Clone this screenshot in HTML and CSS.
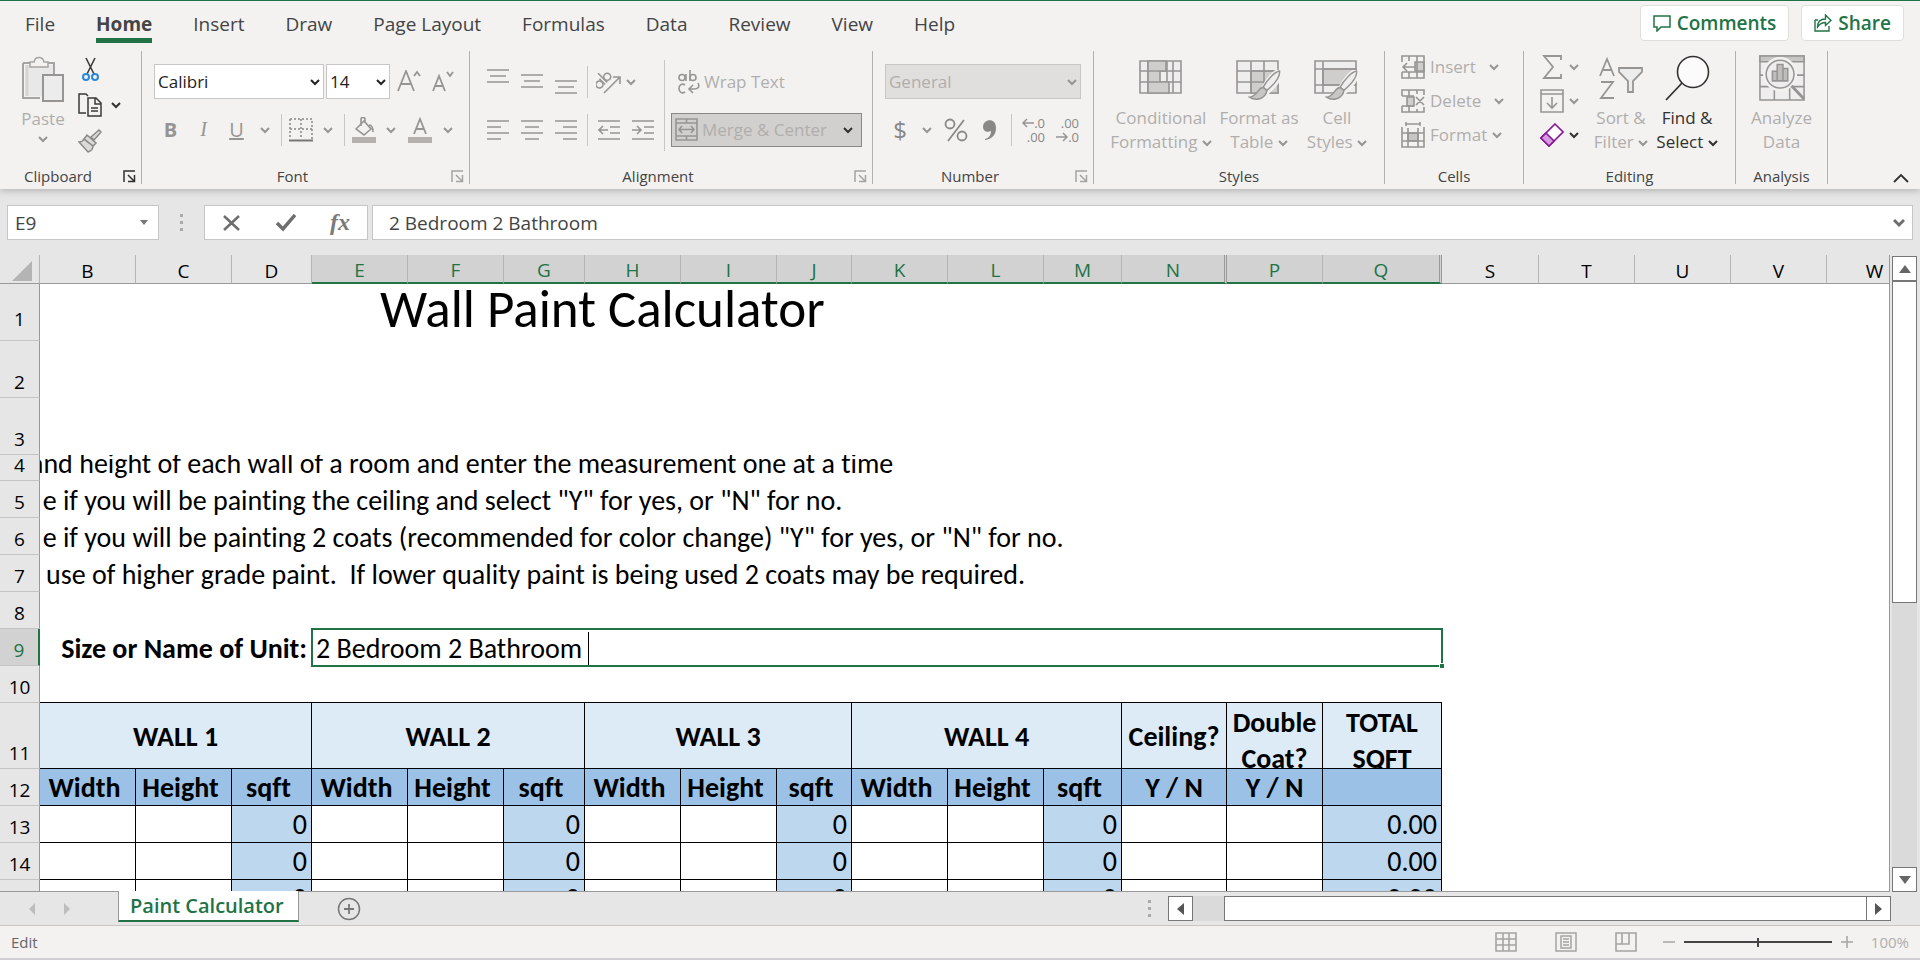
FILE: index.html
```html
<!DOCTYPE html>
<html lang="en">
<head>
<meta charset="utf-8">
<title>Paint Calculator</title>
<link rel="stylesheet" href="styles.css">
</head>
<body>
<svg class="defs" aria-hidden="true">
  <symbol id="chev" viewBox="0 0 10 10"><path d="M1 3l4 4 4-4" fill="none" stroke="currentColor" stroke-width="2"/></symbol>
  <symbol id="launch" viewBox="0 0 13 13"><path d="M1 12V1h11M5 5l6 6M11.500 5v6.500H5" fill="none" stroke="currentColor" stroke-width="1.500"/></symbol>
  <symbol id="brush" viewBox="0 0 34 32"><path d="M32 1c-5 1-12 9-16 17l4 4C26 17 33 9 32 1z" fill="#f3f2f1" stroke="#f3f2f1" stroke-width="5"/><path d="M32 1c-5 1-13 9-17 17l4 3C25 16 33 8 32 1z" fill="#eee" stroke="#979593" stroke-width="1.500"/><path d="M15 18c-6 0-5 9-14 10 6 4 16 3 18-7z" fill="#c8c6c4" stroke="#979593" stroke-width="1.500"/></symbol>
</svg>
<div class="app">
<header class="ribbon">
  <nav class="tabs">
    <a class="tab" href="#">File</a><a class="tab tab-on" href="#">Home</a><a class="tab" href="#">Insert</a><a class="tab" href="#">Draw</a><a class="tab" href="#">Page Layout</a><a class="tab" href="#">Formulas</a><a class="tab" href="#">Data</a><a class="tab" href="#">Review</a><a class="tab" href="#">View</a><a class="tab" href="#">Help</a>
    <div class="tab-actions">
      <button class="action"><svg width="18" height="18" viewBox="0 0 18 18"><path d="M1 2h16v11H8l-4 4v-4H1z" fill="none" stroke="currentColor" stroke-width="1.500"/></svg>Comments</button>
      <button class="action"><svg width="18" height="18" viewBox="0 0 18 18"><path d="M1 6v11h14v-5M1 6h3M3.500 13c0-5 3-8 8-8V1l5.500 5.500-5.500 5V8.500c-4 0-6 1.500-8 4.500z" fill="none" stroke="currentColor" stroke-width="1.400"/></svg>Share</button>
    </div>
  </nav>
  <div class="groups">
    <section class="group g-clipboard">
      <div class="body">
        <button class="big paste"><svg width="42" height="46" viewBox="0 0 42 46"><path d="M1 7h31v12M18 42H1V7" fill="none" stroke="#a6a4a2" stroke-width="2"/><path d="M3 9h28v10H20v21H3z" fill="#e8e8e8"/><path d="M5 9v31" stroke="#d6d4d2" stroke-width="3"/><path d="M8 11V6h4c1-6 9-6 10 0h4v5z" fill="#f3f2f1" stroke="#a6a4a2" stroke-width="1.500"/><path d="M21 19h20v26H21z" fill="#ececec" stroke="#979593" stroke-width="2"/></svg><span>Paste</span><svg class="chev"><use href="#chev"/></svg></button>
        <div class="clip-tools">
          <button class="tool" aria-label="Cut"><svg width="24" height="24" viewBox="0 0 24 24"><path d="M8 1l8 16M17 1L9 17" stroke="#3b3a39" stroke-width="1.600"/><circle cx="8" cy="20" r="3" fill="none" stroke="#2b88d8" stroke-width="2"/><circle cx="17" cy="20" r="3" fill="none" stroke="#2b88d8" stroke-width="2"/></svg></button>
          <div class="pair"><button class="tool" aria-label="Copy"><svg width="24" height="24" viewBox="0 0 24 24"><path d="M8 20H1V1h7l2 2M10 23V5h8l5 5v13zM17 5v6h6M13 15h7M13 18h7" fill="none" stroke="#3b3a39" stroke-width="1.500"/></svg></button><svg class="chev dark"><use href="#chev"/></svg></div>
          <button class="tool" aria-label="Format Painter"><svg width="24" height="24" viewBox="0 0 24 24"><path d="M13 8l8-7 2 2-7 8zM9 6l9 8-3 3-9-7zM6 10c-1 2-3 3-5 3l9 10c3-1 5-3 5-6z" fill="#dcdad8" stroke="#8a8886" stroke-width="1.500"/></svg></button>
        </div>
      </div>
      <footer class="foot"><span>Clipboard</span><svg class="launch dark"><use href="#launch"/></svg></footer>
    </section>
    <section class="group g-font">
      <div class="body rows">
        <div class="row">
          <label class="sel sel-font"><select aria-label="Font"><option>Calibri</option></select><svg class="chev"><use href="#chev"/></svg></label>
          <label class="sel sel-size"><select aria-label="Font size"><option>14</option></select><svg class="chev"><use href="#chev"/></svg></label>
          <button class="tool w34" aria-label="Increase font size"><svg width="24" height="24" viewBox="0 0 24 24"><path d="M1 21L9 1l8 20M4 14h10M17 6l3-4 3 4" fill="none" stroke="#979593" stroke-width="1.800"/></svg></button>
          <button class="tool w34" aria-label="Decrease font size"><svg width="24" height="24" viewBox="0 0 24 24"><path d="M2 21L8 6l6 15M4 16h8M16 2l3 4 3-4" fill="none" stroke="#979593" stroke-width="1.800"/></svg></button>
        </div>
        <div class="row">
          <button class="tool w33 fmt"><b>B</b></button><button class="tool w33 fmt serif"><i>I</i></button><button class="tool w33 fmt"><u>U</u></button><svg class="chev wide"><use href="#chev"/></svg>
          <i class="sep"></i>
          <button class="tool w30" aria-label="Borders"><svg width="24" height="24" viewBox="0 0 24 24"><path d="M1 1h22v20M1 1v20M12 1v20M1 11h22" fill="none" stroke="#8a8886" stroke-width="1.500" stroke-dasharray="2 2"/><path d="M0 22.500h24" stroke="#797775" stroke-width="2"/></svg></button><svg class="chev wide"><use href="#chev"/></svg>
          <i class="sep"></i>
          <button class="tool w30" aria-label="Fill color"><svg width="26" height="26" viewBox="0 0 26 26"><path d="M5 12l8-8 7 8-7 6zM10 9V2c0-2 4-2 4 0v4M18 8c3 0 4 3 4 7" fill="none" stroke="#979593" stroke-width="1.600"/><path d="M1 20h24v6H1z" fill="#b3b0ad"/></svg></button><svg class="chev wide"><use href="#chev"/></svg>
          <button class="tool w33" aria-label="Font color"><svg width="26" height="26" viewBox="0 0 26 26"><path d="M7 17L13 2l6 15M9 12h8" fill="none" stroke="#979593" stroke-width="1.800"/><path d="M1 20h24v6H1z" fill="#b3b0ad"/></svg></button><svg class="chev wide"><use href="#chev"/></svg>
        </div>
      </div>
      <footer class="foot"><span>Font</span><svg class="launch"><use href="#launch"/></svg></footer>
    </section>
    <section class="group g-align">
      <div class="body">
        <div class="rows">
          <div class="row">
            <button class="tool w34" aria-label="Top align"><svg width="22" height="26" viewBox="0 0 22 26"><path d="M0 1h22M3 7h16M0 13h22" stroke="#979593" stroke-width="1.600"/></svg></button>
            <button class="tool w34" aria-label="Middle align"><svg width="22" height="26" viewBox="0 0 22 26"><path d="M0 6h22M3 12h16M0 18h22" stroke="#979593" stroke-width="1.600"/></svg></button>
            <button class="tool w34" aria-label="Bottom align"><svg width="22" height="26" viewBox="0 0 22 26"><path d="M0 12h22M3 18h16M0 24h22" stroke="#979593" stroke-width="1.600"/></svg></button>
            <i class="sep"></i>
            <button class="tool w34" aria-label="Orientation"><svg width="26" height="26" viewBox="0 0 26 26"><g fill="none" stroke="#979593" stroke-width="1.600"><path d="M8 24L24 8M17 8h7v7"/><g transform="rotate(-45 7 12)"><circle cx="2" cy="12" r="3.500"/><path d="M6 8v8M9 3v13"/><circle cx="13" cy="12" r="3.500"/></g></g></svg></button><svg class="chev"><use href="#chev"/></svg>
          </div>
          <div class="row">
            <button class="tool w34" aria-label="Align left"><svg width="22" height="20" viewBox="0 0 22 20"><path d="M0 1h22M0 7h14M0 13h22M0 19h14" stroke="#979593" stroke-width="1.600"/></svg></button>
            <button class="tool w34" aria-label="Center"><svg width="22" height="20" viewBox="0 0 22 20"><path d="M0 1h22M4 7h14M0 13h22M4 19h14" stroke="#979593" stroke-width="1.600"/></svg></button>
            <button class="tool w34" aria-label="Align right"><svg width="22" height="20" viewBox="0 0 22 20"><path d="M0 1h22M8 7h14M0 13h22M8 19h14" stroke="#979593" stroke-width="1.600"/></svg></button>
            <i class="sep"></i>
            <button class="tool w34" aria-label="Decrease indent"><svg width="22" height="20" viewBox="0 0 22 20"><path d="M0 1h22M12 7h10M12 13h10M0 19h22M10 10H1M5 6l-4 4 4 4" fill="none" stroke="#979593" stroke-width="1.600"/></svg></button>
            <button class="tool w34" aria-label="Increase indent"><svg width="22" height="20" viewBox="0 0 22 20"><path d="M0 1h22M12 7h10M12 13h10M0 19h22M0 10h9M5 6l4 4-4 4" fill="none" stroke="#979593" stroke-width="1.600"/></svg></button>
          </div>
        </div>
        <i class="sep tall"></i>
        <div class="rows merge-col">
          <div class="row"><button class="text-tool"><svg width="22" height="26" viewBox="0 0 22 26"><g fill="none" stroke="#979593" stroke-width="1.600"><circle cx="4" cy="8.500" r="3"/><path d="M8 5v7M12 1v11M7 16c-3-2-6 0-6 3.500S4 25 7 23M20 14c2 4 0 6-4 6h-5M15 16l-4 4 4 4"/><circle cx="15" cy="8.500" r="3"/></g></svg>Wrap Text</button></div>
          <div class="row"><button class="text-tool merge"><svg width="23" height="23" viewBox="0 0 23 23"><path d="M1 1h21v21H1zM1 5h21M1 18h21M11.500 1v4M11.500 18v4" fill="none" stroke="#979593" stroke-width="1.600"/><path d="M4 11.500h15M7 8l-3 3.500L7 15M16 8l3 3.500-3 3.500" fill="none" stroke="#979593" stroke-width="1.600"/></svg><span>Merge &amp; Center</span><svg class="chev dark"><use href="#chev"/></svg></button></div>
        </div>
      </div>
      <footer class="foot"><span>Alignment</span><svg class="launch"><use href="#launch"/></svg></footer>
    </section>
    <section class="group g-number">
      <div class="body rows">
        <div class="row"><label class="sel sel-num"><select aria-label="Number format" disabled><option>General</option></select><svg class="chev"><use href="#chev"/></svg></label></div>
        <div class="row">
          <button class="tool w30 money">$</button><svg class="chev wide"><use href="#chev"/></svg>
          <button class="tool w34" aria-label="Percent"><svg width="24" height="24" viewBox="0 0 24 24"><g fill="none" stroke="#8a8886" stroke-width="1.800"><circle cx="6" cy="6" r="4.500"/><circle cx="18" cy="18" r="4.500"/><path d="M20 2L4 23"/></g></svg></button>
          <button class="tool w34" aria-label="Comma style"><svg width="14" height="20" viewBox="0 0 14 20"><path d="M2 19c4-1 6-4 6-8-4 2-8 0-8-4 0-8 13-10 13 1 0 7-4 11-11 12z" fill="#8a8886"/></svg></button>
          <i class="sep"></i>
          <button class="tool w34 dec" aria-label="Increase decimal"><span><svg width="12" height="10" viewBox="0 0 12 10"><path d="M12 5H1M5 1L1 5l4 4" fill="none" stroke="#979593" stroke-width="1.500"/></svg>.0</span><span>.00</span></button>
          <button class="tool w34 dec" aria-label="Decrease decimal"><span>.00</span><span><svg width="12" height="10" viewBox="0 0 12 10"><path d="M0 5h11M7 1l4 4-4 4" fill="none" stroke="#979593" stroke-width="1.500"/></svg>.0</span></button>
        </div>
      </div>
      <footer class="foot"><span>Number</span><svg class="launch"><use href="#launch"/></svg></footer>
    </section>
    <section class="group g-styles">
      <div class="body">
        <button class="big w110"><svg width="44" height="46" viewBox="0 0 44 46"><g stroke="#979593" stroke-width="1.600"><path d="M1 6h41v32H1z" fill="#eee"/><path d="M1 16h41M1 27h41M9 6v32M28 6v32M34 6v32" fill="none"/><path d="M9 6h18v10H9zM9 16h12v11H9zM9 27h21v11H9z" fill="#d0cecc"/></g></svg><span>Conditional<br>Formatting <svg class="chev"><use href="#chev"/></svg></span></button>
        <button class="big w86"><svg width="46" height="46" viewBox="0 0 46 46"><g stroke="#979593" stroke-width="1.600"><path d="M1 6h41v32H1z" fill="#eee"/><path d="M15 16h27v22H15z" fill="#d0cecc"/><path d="M1 16h41M1 27h41M15 6v32M28 6v32" fill="none"/></g><use href="#brush" x="12" y="15" width="34" height="31"/></svg><span>Format as<br>Table <svg class="chev"><use href="#chev"/></svg></span></button>
        <button class="big w70"><svg width="46" height="46" viewBox="0 0 46 46"><g stroke="#979593" stroke-width="1.600"><path d="M1 6h41v32H1z" fill="#eee"/><path d="M9 14h33v16H9z" fill="#d0cecc"/><path d="M1 14h41M1 30h41M9 6v32" fill="none"/></g><use href="#brush" x="11" y="15" width="34" height="31"/></svg><span>Cell<br>Styles <svg class="chev"><use href="#chev"/></svg></span></button>
      </div>
      <footer class="foot plain"><span>Styles</span></footer>
    </section>
    <section class="group g-cells">
      <div class="body stack">
        <button class="text-tool"><svg width="24" height="24" viewBox="0 0 24 24"><g fill="none" stroke="#979593" stroke-width="1.600"><path d="M14 7h9v9h-9z" fill="#d0cecc"/><path d="M1 7V1h22v22H1v-6M1 17h22M8 1v5M16 1v22M8 17v6M14 12H2M6 8l-4 4 4 4"/></g></svg><span>Insert</span><svg class="chev far"><use href="#chev"/></svg></button>
        <button class="text-tool"><svg width="24" height="24" viewBox="0 0 24 24"><g fill="none" stroke="#979593" stroke-width="1.600"><path d="M6 8h7v9H6z" fill="#d0cecc"/><path d="M1 7V1h22v5M1 7h12M1 17h12M1 17v6h22v-5M8 1v6M16 1v4M8 17v6M16 20v3M15 8l8 8M23 8l-8 8"/></g></svg><span>Delete</span><svg class="chev far"><use href="#chev"/></svg></button>
        <button class="text-tool"><svg width="24" height="26" viewBox="0 0 24 26"><g fill="none" stroke="#979593" stroke-width="1.600"><path d="M7 11h10v8H7z" fill="#c8c6c4"/><path d="M1 5v20h22V5M1 11h22M1 19h22M7 6v19M17 6v19M5 2h14M5 0v4M19 0v4"/></g></svg><span>Format</span><svg class="chev"><use href="#chev"/></svg></button>
      </div>
      <footer class="foot plain"><span>Cells</span></footer>
    </section>
    <section class="group g-editing">
      <div class="body">
        <div class="stack">
          <button class="text-tool" aria-label="AutoSum"><svg width="24" height="24" viewBox="0 0 24 24"><path d="M21 5V1H4l9 11L4 23h17v-4" fill="none" stroke="#979593" stroke-width="1.800"/></svg><svg class="chev"><use href="#chev"/></svg></button>
          <button class="text-tool" aria-label="Fill"><svg width="24" height="24" viewBox="0 0 24 24"><path d="M1 1h22v22H1zM1 5h22M12 8v11M7 14l5 5 5-5" fill="none" stroke="#979593" stroke-width="1.600"/></svg><svg class="chev"><use href="#chev"/></svg></button>
          <button class="text-tool" aria-label="Clear"><svg width="24" height="24" viewBox="0 0 24 24"><path d="M15 1l8 8L9 23l-8-8z" fill="#fff" stroke="#881798" stroke-width="1.600"/><path d="M6 10l8 8-5 5-8-8z" fill="#d59ae0" stroke="#881798" stroke-width="1.600"/></svg><svg class="chev dark"><use href="#chev"/></svg></button>
        </div>
        <button class="big w66"><svg width="44" height="46" viewBox="0 0 44 46"><g fill="none" stroke="#979593" stroke-width="1.800"><path d="M1 21L8 4l7 17M4 15h8M2 27h12L2 43h13"/><path d="M20 13h23v4l-9 9v11h-5V26l-9-9z" fill="#ececec"/></g></svg><span>Sort &amp;<br>Filter <svg class="chev"><use href="#chev"/></svg></span></button>
        <button class="big w66 dark"><svg width="46" height="46" viewBox="0 0 46 46"><circle cx="29" cy="17" r="15.500" fill="#fbfbfb" stroke="#323130" stroke-width="1.600"/><path d="M18 28L2 45" stroke="#323130" stroke-width="1.800"/></svg><span>Find &amp;<br>Select <svg class="chev dark"><use href="#chev"/></svg></span></button>
      </div>
      <footer class="foot plain"><span>Editing</span></footer>
    </section>
    <section class="group g-analysis">
      <div class="body">
        <button class="big w91"><svg width="48" height="46" viewBox="0 0 48 48"><g stroke="#979593" stroke-width="1.600"><path d="M1 1h46v46H1z" fill="#eee"/><path d="M1 1h46v6H1z" fill="#c8c6c4"/><path d="M1 21h46M1 33h46M16 33v14M32 33v14" fill="none"/><circle cx="22" cy="20" r="17" fill="#f3f2f1" stroke="#f3f2f1"/><circle cx="22" cy="20" r="14.500" fill="#eee"/><path d="M34 32l13 14" stroke-width="3"/><path d="M14 17h5v10h-5zM19 10h6v17h-6zM25 14h5v13h-5z" fill="#c0bebc"/></g></svg><span>Analyze<br>Data</span></button>
      </div>
      <footer class="foot plain"><span>Analysis</span></footer>
    </section>
    <button class="collapse" aria-label="Collapse ribbon"><svg width="16" height="10" viewBox="0 0 16 10"><path d="M1 9l7-7 7 7" fill="none" stroke="#323130" stroke-width="1.800"/></svg></button>
  </div>
</header>
<div class="formula-bar">
  <div class="name-box"><input aria-label="Name box" value="E9"><svg width="8" height="5" viewBox="0 0 8 5"><path d="M0 0h8L4 5z" fill="#777"/></svg></div>
  <div class="dots"><i></i><i></i><i></i></div>
  <div class="fx-tools">
    <button aria-label="Cancel"><svg width="20" height="18" viewBox="0 0 20 18"><path d="M2 2l15 14M17 2L2 16" stroke="#6e6e6e" stroke-width="2.500"/></svg></button>
    <button aria-label="Enter"><svg width="20" height="18" viewBox="0 0 20 18"><path d="M1 9l6 6L19 1" fill="none" stroke="#6e6e6e" stroke-width="3.500"/></svg></button>
    <button class="fx"><i>fx</i></button>
  </div>
  <div class="formula"><input aria-label="Formula" value="2 Bedroom 2 Bathroom"><svg width="12" height="10" viewBox="0 0 12 10"><path d="M1 2l5 5 5-5" fill="none" stroke="#6e6e6e" stroke-width="3"/></svg></div>
</div>
<main class="work">
  <div class="sheet">
    <table class="grid">
      <colgroup><col class="c40"><col class="c96"><col class="c96"><col class="c80"><col class="c96"><col class="c96"><col class="c81"><col class="c96"><col class="c96"><col class="c75"><col class="c96"><col class="c96"><col class="c78"><col class="c105"><col class="c96"><col class="c119"><col class="c97"><col class="c96"><col class="c96"><col class="c96"><col class="c96"></colgroup>
      <thead><tr><th class="corner"><svg width="20" height="20" viewBox="0 0 20 20"><path d="M20 0v20H0z" fill="#b4b4b4"/></svg></th><th>B</th><th>C</th><th>D</th><th class="on">E</th><th class="on">F</th><th class="on">G</th><th class="on">H</th><th class="on">I</th><th class="on">J</th><th class="on">K</th><th class="on">L</th><th class="on">M</th><th class="on skip">N</th><th class="on">P</th><th class="on skip">Q</th><th>S</th><th>T</th><th>U</th><th>V</th><th>W</th></tr></thead>
      <tbody>
        <tr class="r57 first"><th>1</th><td colspan="3"></td><td colspan="17" class="title">Wall Paint Calculator</td></tr>
        <tr class="r57"><th>2</th><td colspan="20"></td></tr>
        <tr class="r57"><th>3</th><td colspan="20"></td></tr>
        <tr class="r26"><th>4</th><td colspan="20"><div class="note">and height of each wall of a room and enter the measurement one at a time</div></td></tr>
        <tr class="r37"><th>5</th><td colspan="20"><div class="note">  e if you will be painting the ceiling and select "Y" for yes, or "N" for no.</div></td></tr>
        <tr class="r37"><th>6</th><td colspan="20"><div class="note">  e if you will be painting 2 coats (recommended for color change) "Y" for yes, or "N" for no.</div></td></tr>
        <tr class="r37"><th>7</th><td colspan="20"><div class="note">r use of higher grade paint.&nbsp; If lower quality paint is being used 2 coats may be required.</div></td></tr>
        <tr class="r37"><th>8</th><td colspan="20"></td></tr>
        <tr class="r37"><th class="on">9</th><td colspan="3" class="unit"><label for="unit">Size or Name of Unit:</label></td><td colspan="12" class="active"><div class="editor"><input id="unit" value="2 Bedroom 2 Bathroom"><i class="caret"></i></div><i class="handle"></i></td><td colspan="5"></td></tr>
        <tr class="r37 above"><th>10</th><td colspan="15"></td><td colspan="5" class="off"></td></tr>
        <tr class="r66 walls"><th>11</th><td colspan="3">WALL 1</td><td colspan="3">WALL 2</td><td colspan="3">WALL 3</td><td colspan="3">WALL 4</td><td>Ceiling?</td><td><div class="wrap">Double Coat?</div></td><td><div class="wrap">TOTAL SQFT</div></td><td colspan="5" class="off"></td></tr>
        <tr class="r37 heads"><th>12</th><td>Width</td><td>Height</td><td>sqft</td><td>Width</td><td>Height</td><td>sqft</td><td>Width</td><td>Height</td><td>sqft</td><td>Width</td><td>Height</td><td>sqft</td><td class="yn">Y / N</td><td class="yn">Y / N</td><td></td><td colspan="5" class="off"></td></tr>
        <tr class="r37 data"><th>13</th><td></td><td></td><td class="sum">0</td><td></td><td></td><td class="sum">0</td><td></td><td></td><td class="sum">0</td><td></td><td></td><td class="sum">0</td><td></td><td></td><td class="sum">0.00</td><td colspan="5" class="off"></td></tr>
        <tr class="r37 data"><th>14</th><td></td><td></td><td class="sum">0</td><td></td><td></td><td class="sum">0</td><td></td><td></td><td class="sum">0</td><td></td><td></td><td class="sum">0</td><td></td><td></td><td class="sum">0.00</td><td colspan="5" class="off"></td></tr>
        <tr class="r37 data"><th></th><td></td><td></td><td class="sum">0</td><td></td><td></td><td class="sum">0</td><td></td><td></td><td class="sum">0</td><td></td><td></td><td class="sum">0</td><td></td><td></td><td class="sum">0.00</td><td colspan="5" class="off"></td></tr>
      </tbody>
    </table>
  </div>
  <div class="vscroll">
    <button aria-label="Scroll up"><svg width="12" height="8" viewBox="0 0 12 8"><path d="M0 8h12L6 0z" fill="#666"/></svg></button>
    <div class="vtrack"><div class="vthumb"></div></div>
    <button aria-label="Scroll down"><svg width="12" height="8" viewBox="0 0 12 8"><path d="M0 0h12L6 8z" fill="#666"/></svg></button>
  </div>
</main>
<div class="sheet-tabs">
  <div class="arrows"><svg width="6" height="12" viewBox="0 0 6 12"><path d="M6 0v12L0 6z" fill="#bdbdbd"/></svg><svg width="6" height="12" viewBox="0 0 6 12"><path d="M0 0v12l6-6z" fill="#bdbdbd"/></svg></div>
  <button class="sheet-tab">Paint Calculator</button>
  <button class="add" aria-label="New sheet"><svg width="24" height="24" viewBox="0 0 24 24"><circle cx="12" cy="12" r="10.500" fill="none" stroke="#777" stroke-width="1.500"/><path d="M12 7v10M7 12h10" stroke="#777" stroke-width="1.800"/></svg></button>
  <div class="dots push"><i></i><i></i><i></i></div>
  <div class="hscroll">
    <button aria-label="Scroll left"><svg width="7" height="12" viewBox="0 0 7 12"><path d="M7 0v12L0 6z" fill="#555"/></svg></button>
    <div class="htrack"><div class="hthumb"></div></div>
    <button aria-label="Scroll right"><svg width="7" height="12" viewBox="0 0 7 12"><path d="M0 0v12l7-6z" fill="#555"/></svg></button>
  </div>
</div>
<footer class="status">
  <span class="mode">Edit</span>
  <button aria-label="Normal view"><svg width="22" height="20" viewBox="0 0 22 20"><path d="M1 1h20v18H1zM1 7h20M1 13h20M8 1v18M14 1v18" fill="none" stroke="#a6a4a2" stroke-width="1.600"/></svg></button>
  <button aria-label="Page layout view"><svg width="22" height="20" viewBox="0 0 22 20"><path d="M1 1h20v18H1zM6 4h10v12H6zM8 7h6M8 10h6M8 13h6" fill="none" stroke="#a6a4a2" stroke-width="1.500"/></svg></button>
  <button aria-label="Page break view"><svg width="22" height="20" viewBox="0 0 22 20"><path d="M1 1h20v18H1zM1 12h13V1M7 1v11" fill="none" stroke="#a6a4a2" stroke-width="1.600"/></svg></button>
  <div class="zoom"><svg width="12" height="12" viewBox="0 0 12 12"><path d="M0 6h12" stroke="#a6a4a2" stroke-width="1.500"/></svg><input type="range" aria-label="Zoom" value="50"><svg width="12" height="12" viewBox="0 0 12 12"><path d="M0 6h12M6 0v12" stroke="#a6a4a2" stroke-width="1.500"/></svg></div>
  <span class="pct">100%</span>
</footer>
</div>
</body>
</html>
```

FILE: styles.css
```css
* { box-sizing: border-box; }
body { margin: 0; background: #e6e6e6; font-family: "Open Sans", "Noto Sans", sans-serif; color: #444; }
button { font: inherit; color: inherit; background: none; border: 0; padding: 0; }
input, select { font: inherit; color: inherit; border: 0; background: none; outline: 0; padding: 0; min-width: 0; }
svg { display: block; flex: none; }
.defs { width: 0; height: 0; position: absolute; }
.app { display: flex; flex-direction: column; height: 100vh; overflow: hidden; }

.ribbon { background: #f3f2f1; border-top: 1px solid #217346; box-shadow: 0 1px 8px #a8a8a8; height: 189px; flex: none; }
.tabs { display: flex; height: 50px; padding: 4px 16px 0 25px; gap: 41px; font-size: 19px; }
.tab { color: #444; text-decoration: none; line-height: 38px; height: 38px; }
.tab-on { font-weight: 700; border-bottom: 5px solid #217346; }
.tab-actions { margin-left: auto; display: flex; gap: 12px; }
.action { display: flex; align-items: center; gap: 6px; height: 36px; padding: 0 12px; background: #fff; border: 1px solid #e1dfdd; border-radius: 4px; color: #217346; font-weight: 600; }
.groups { display: flex; height: 133px; }
.group { display: flex; flex-direction: column; border-right: 1px solid #b3b0ad; flex: none; font-size: 17px; color: #b0aeac; }
.body { display: flex; flex: 1; }
.foot { display: flex; align-items: center; justify-content: center; height: 16px; padding-right: 26px; font-size: 15px; line-height: 22px; color: #444; position: relative; }
.plain { padding-right: 0; }
.launch { width: 13px; height: 13px; position: absolute; right: 5px; top: 2px; color: #a6a4a2; }
.chev { width: 10px; height: 10px; color: #979593; }
.dark, .chev.dark, .launch.dark { color: #323130; }
.wide { width: 24px; padding: 0 7px; }
.tool { display: flex; align-items: center; justify-content: center; }
.w30 { width: 30px; } .w33 { width: 33px; } .w34 { width: 34px; }
.sep { width: 1px; height: 32px; background: #c8c6c4; margin: 0 4px; flex: none; }
.tall { height: 91px; margin-top: 9px; }

.rows { display: flex; flex-direction: column; }
.row { display: flex; align-items: center; height: 35px; margin-top: 13px; }
.big { display: flex; flex-direction: column; align-items: center; line-height: 24px; white-space: nowrap; }
.big > svg { margin: 4px 0 5px; }
.big .chev { display: inline-block; }
.w110 { width: 110px; } .w86 { width: 86px; } .w70 { width: 70px; } .w66 { width: 66px; } .w91 { width: 91px; }
.stack { display: flex; flex-direction: column; gap: 10px; padding-top: 4px; }
.text-tool { display: flex; align-items: center; gap: 5px; height: 24px; line-height: 24px; white-space: nowrap; }

.g-clipboard { width: 142px; }
.g-clipboard .foot { justify-content: flex-start; padding-left: 24px; }
.paste { width: 52px; margin-left: 17px; }
.paste > svg { margin-top: 5px; }
.paste .chev { margin: 3px 0 0; }
.clip-tools { display: flex; flex-direction: column; gap: 12px; padding: 6px 0 0 9px; }
.clip-tools > button { align-self: flex-start; }
.pair { display: flex; align-items: center; gap: 9px; }
.g-font { width: 328px; }
.g-font .row { padding-left: 12px; }
.sel { position: relative; height: 35px; border: 1px solid #c8c6c4; background: #fff; margin-right: 2px; font-size: 17px; color: #222; }
.sel select { appearance: none; width: 100%; height: 100%; padding-left: 3px; opacity: 1; }
.sel .chev { position: absolute; right: 3px; top: 12px; color: #222; pointer-events: none; }
.sel-font { width: 170px; } .sel-size { width: 64px; }
.sel-num { width: 196px; background: #e1dfdd; color: #b0aeac; }
.sel-num .chev { color: #979593; }
.fmt { font-size: 20px; color: #979593; }
.serif { font-family: "Liberation Serif", serif; }
.g-align { width: 403px; }
.g-align .rows .row { padding-left: 11px; }
.g-align .merge-col .row { padding-left: 2px; }
.merge-col .text-tool { padding-left: 7px; gap: 4px; }
.merge-col .merge { width: 191px; height: 34px; padding: 0 8px 0 3px; background: #d2d0ce; border: 1px solid #8a8886; }
.merge .dark { margin-left: auto; }
.g-number { width: 221px; }
.g-number .row { padding-left: 12px; }
.money { font-size: 24px; color: #8a8886; }
.dec { flex-direction: column; align-items: flex-end; padding-right: 5px; font-size: 13px; line-height: 14px; color: #8a8886; }
.dec span { display: flex; align-items: center; }
.g-styles { width: 291px; }
.g-styles .body { padding-left: 12px; }
.g-cells { width: 139px; }
.g-cells .body { padding-left: 16px; }
.far { margin-left: 8px; }
.g-editing { width: 212px; }
.g-editing .stack { width: 60px; padding-left: 16px; margin-right: 4px; }
.g-analysis { width: 92px; }
.collapse { margin: auto 11px 1px auto; }

.formula-bar { display: flex; height: 35px; margin: 16px 7px 15px; font-size: 19px; flex: none; }
.name-box, .fx-tools, .formula { display: flex; align-items: center; background: #fff; border: 1px solid #c6c6c6; }
.name-box { width: 152px; padding: 0 10px 0 7px; }
.name-box input, .formula input { flex: 1; }
.dots { width: 45px; display: flex; flex-direction: column; align-items: center; justify-content: center; gap: 4px; }
.dots i { width: 3px; height: 3px; background: #aaa; }
.fx-tools { width: 164px; margin-right: 4px; }
.fx-tools button { flex: 1; display: flex; justify-content: center; }
.fx-tools .fx { font: 700 24px "Liberation Serif", serif; color: #7a7a7a; }
.formula { flex: 1; padding: 0 7px 0 16px; }

.work { flex: 1; display: flex; min-height: 0; }
.sheet { flex: 1; min-width: 0; overflow: hidden; border-right: 1px solid #999; border-bottom: 1px solid #999; background: #fff; }
.grid { table-layout: fixed; width: 1923px; border-spacing: 0; font-family: Carlito, Lato, sans-serif; font-size: 28px; line-height: 34px; font-variant-ligatures: none; color: #000; }
.c40 { width: 40px; } .c75 { width: 75px; } .c78 { width: 78px; } .c80 { width: 80px; } .c81 { width: 81px; } .c96 { width: 96px; } .c97 { width: 97px; } .c105 { width: 105px; } .c119 { width: 119px; }
.grid th, .grid td { padding: 0; overflow: hidden; white-space: nowrap; }
.grid td { padding-top: 2px; }
.grid th { font: 19px/24px "Open Sans", sans-serif; background: #e6e6e6; }
.grid thead th { height: 29px; padding-top: 3px; border-right: 1px solid #b5b5b5; border-bottom: 1px solid #999; }
.grid thead .on { background: #d2d2d2; color: #217346; border-bottom: 2px solid #217346; }
.grid thead .skip { border-right: 3px double #999; }
.corner svg { margin: 0 7px 0 auto; }
tbody th { vertical-align: bottom; border-right: 1px solid #999; border-bottom: 1px solid #c4c4c4; }
.grid tbody th { padding-bottom: 5px; line-height: 20px; }
.grid .first th { padding-bottom: 11px; }
.grid tbody .on { background: #d2d2d2; color: #217346; border-right: 2px solid #217346; }
.r26 { height: 26px; } .r37 { height: 37px; } .r57 { height: 57px; } .r66 { height: 66px; }
.grid .title { font-size: 53px; line-height: 50px; padding: 0 0 0 68px; vertical-align: top; }
.note { display: flex; align-items: flex-end; height: 35px; text-indent: -10px; overflow: hidden; white-space: pre; }
.grid .r26 td { padding-top: 0; }
.r26 .note { height: 26px; }
.unit { font-weight: 700; text-align: right; }
.grid .unit { padding-right: 5px; }
.grid .active { position: relative; outline: 2px solid #217346; outline-offset: -1px; overflow: visible; }
.editor { display: flex; align-items: center; height: 35px; padding-left: 4px; gap: 6px; }
.editor input { field-sizing: content; height: 34px; }
.caret { width: 1px; height: 34px; background: #000; }
.handle { position: absolute; right: -2px; bottom: -2px; width: 5px; height: 5px; background: #217346; border: solid #fff; border-width: 1px 0 0 1px; }
.above td, .walls td, .heads td, .data td { border-bottom: 1px solid #000; }
.walls td, .heads td, .data td { border-right: 1px solid #000; }
.grid .off { border: 0; }
.walls td { background: #ddebf7; font-weight: 700; text-align: center; }
.wrap { height: 63px; overflow: hidden; white-space: normal; line-height: 36px; }
.heads td { background: #9bc2e6; font-weight: 700; text-align: center; }
.grid .heads td:not(.yn) { padding-right: 6px; }
.grid .sum { background: #bdd7ee; text-align: right; padding-right: 4px; }
.walls .off, .heads .off { background: #fff; }

.vscroll { width: 25px; margin: 1px 3px 0 2px; display: flex; flex-direction: column; }
.vscroll button, .hscroll button { width: 25px; height: 25px; background: #fff; border: 1px solid #777; display: flex; align-items: center; justify-content: center; flex: none; }
.vtrack { flex: 1; background: #dadada; }
.vthumb { height: 55%; background: #fff; border: 1px solid #777; }
.sheet-tabs { display: flex; height: 33px; flex: none; padding-right: 29px; }
.arrows { width: 118px; display: flex; align-items: center; gap: 29px; padding-left: 29px; }
.sheet-tab { height: 31px; padding: 0 14px 0 11px; background: #fff; border: 1px solid #999; border-width: 0 1px 2px; border-bottom-color: #217346; color: #217346; font-weight: 600; font-size: 20px; line-height: 28px; margin-top: -1px; }
.add { margin-left: 38px; }
.push { margin-left: auto; width: 38px; }
.hscroll { display: flex; align-items: center; width: 723px; max-width: 50%; }
.htrack { flex: 1; height: 25px; background: #dadada; padding-left: 31px; }
.hthumb { height: 25px; background: #fff; border: 1px solid #777; border-right: 0; }
.status { display: flex; align-items: center; height: 35px; flex: none; background: #f3f2f1; border-top: 1px solid #c6c6c6; border-bottom: 2px solid #d2cfd2; padding: 0 11px; font-size: 15px; color: #666; }
.mode { margin-right: auto; }
.status button { margin-right: 38px; }
.zoom { display: flex; align-items: center; gap: 9px; margin-left: -12px; }
.zoom input { appearance: none; width: 148px; height: 9px; margin: 0; background: linear-gradient(#444, #444) center / 100% 2px no-repeat; }
.zoom input::-webkit-slider-thumb { appearance: none; width: 2px; height: 9px; background: #444; }
.pct { margin-left: 18px; color: #b0aeac; }
```
